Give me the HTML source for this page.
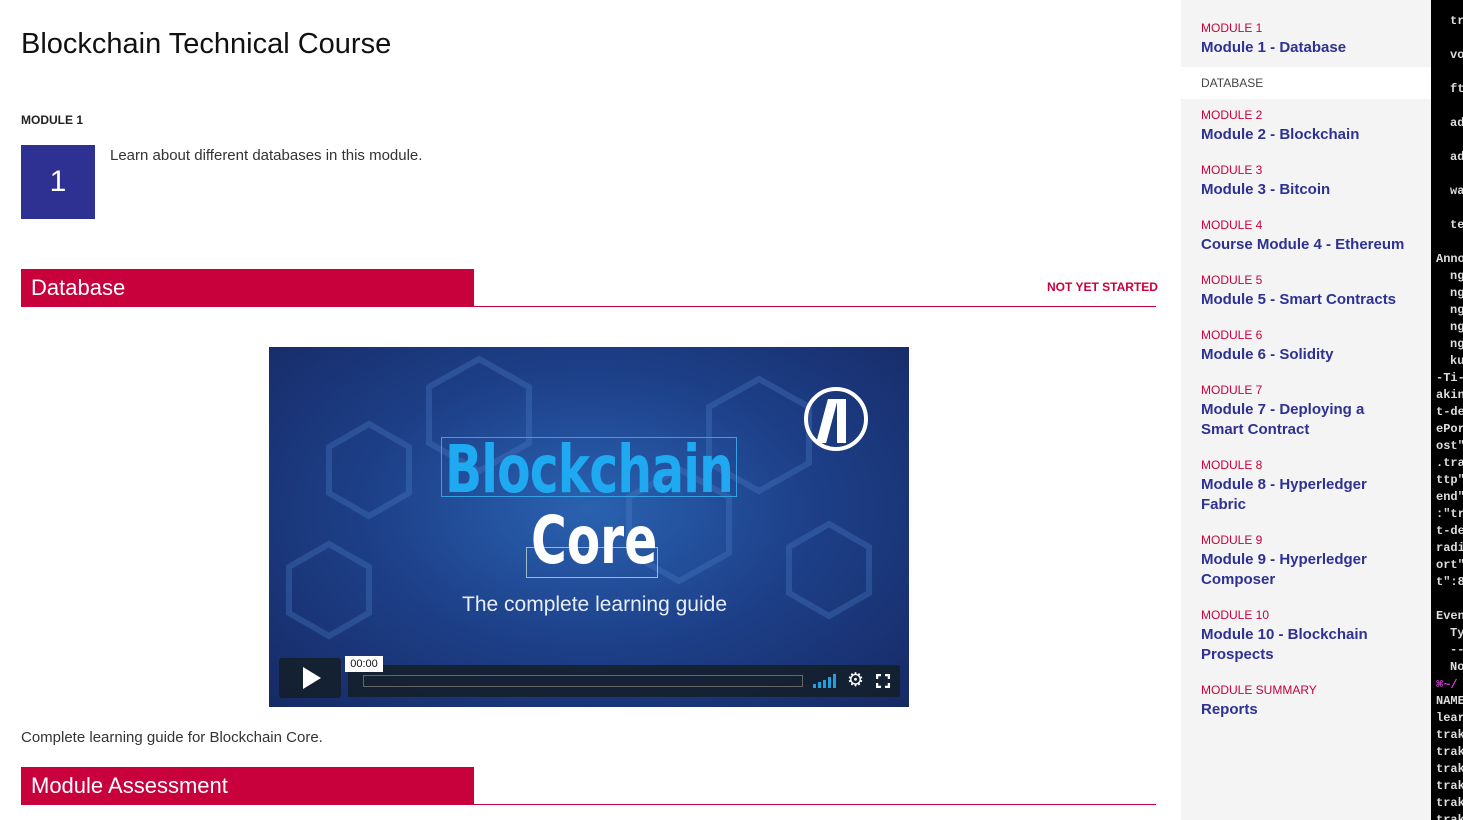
<!DOCTYPE html>
<html><head><meta charset="utf-8"><style>
*{margin:0;padding:0;box-sizing:border-box}
body{width:1463px;height:820px;overflow:hidden;background:#fff;font-family:"Liberation Sans",sans-serif;position:relative;color:#222}
.a{position:absolute;white-space:nowrap}
.side{position:absolute;left:1181px;top:0;width:250px;height:820px;background:#f4f4f5}
.ml{position:absolute;left:20px;font-size:12px;color:#c8003c;margin-top:1px}
.mt{position:absolute;left:20px;font-size:15px;color:#2e3192;font-weight:bold;line-height:20px;margin-top:1px}
.term{position:absolute;left:1431px;top:0;width:32px;height:820px;background:#000;color:#ddd;font-family:"Liberation Mono",monospace;font-size:12px;font-weight:bold;overflow:hidden}
.term div{position:absolute;white-space:pre;margin-top:2px}
.bar{position:absolute;left:21px;width:1135px;border-bottom:1px solid #c8003c}
.bar span{display:block;width:453px;height:37px;background:#c8003c;color:#fff;font-size:22px;line-height:37px;padding-left:10px}
</style></head><body>
<div class="a" style="left:21px;top:28px;font-size:29px;color:#111">Blockchain Technical Course</div>
<div class="a" style="left:21px;top:113px;font-size:12px;font-weight:bold">MODULE 1</div>
<div class="a" style="left:21px;top:145px;width:74px;height:74px;background:#2e3192;color:#fff;font-size:30px;text-align:center;line-height:74px">1</div>
<div class="a" style="left:110px;top:147px;font-size:15px;color:#333">Learn about different databases in this module.</div>
<div class="bar" style="top:269px"><span>Database</span></div>
<div class="a" style="left:1047px;top:280px;font-size:12px;color:#c8003c;font-weight:bold">NOT YET STARTED</div>
<div class="a" style="left:269px;top:347px;width:640px;height:360px;background:radial-gradient(ellipse at 50% 45%,#2a62b0 0%,#1d3f88 50%,#162a64 100%);overflow:hidden">
 <svg width="640" height="360" style="position:absolute;left:0;top:0" fill="none" stroke="#4a7bc4" stroke-opacity=".35" stroke-width="6">
  <polygon points="60,100 100,77 140,100 140,146 100,169 60,146"/><polygon points="160,40 210,12 260,40 260,96 210,124 160,96"/>
  <polygon points="440,60 490,32 540,60 540,116 490,144 440,116"/><polygon points="520,200 560,177 600,200 600,246 560,269 520,246"/>
  <polygon points="20,220 60,197 100,220 100,266 60,289 20,266"/><polygon points="360,150 410,122 460,150 460,206 410,234 360,206"/>
 </svg>
 <div style="position:absolute;left:172px;top:90px;width:296px;height:60px;border:1px solid #3aa0e6"></div>
 <div class="a" style="left:176px;top:84px;font-family:'DejaVu Sans Condensed','Liberation Sans Narrow',sans-serif;font-weight:bold;font-size:66px;color:#1fa9f0;letter-spacing:-1px;transform:scaleX(.82);transform-origin:left">Blockchain</div>
 <div style="position:absolute;left:257px;top:200px;width:132px;height:31px;border:1px solid #9bc"></div>
 <div class="a" style="left:262px;top:155px;font-family:'DejaVu Sans Condensed',sans-serif;font-weight:bold;font-size:66px;color:#fff;transform:scaleX(.82);transform-origin:left">Core</div>
 <div class="a" style="left:193px;top:246px;font-size:21px;color:#e8eef8">The complete learning guide</div>
 <div style="position:absolute;left:535px;top:40px;width:64px;height:64px;border:4px solid #fff;border-radius:50%"></div>
 <div class="a" style="left:553px;top:52px;width:10px;height:44px;background:#fff;transform:skewX(-15deg)"></div>
 <div class="a" style="left:568px;top:52px;width:9px;height:44px;background:#fff"></div>
 <div class="a" style="left:10px;top:311px;width:62px;height:40px;background:rgba(20,30,40,.85);border-radius:3px"></div>
 <svg class="a" style="left:34px;top:320px" width="20" height="22"><polygon points="0,0 18,11 0,22" fill="#fff"/></svg>
 <div class="a" style="left:79px;top:318px;width:552px;height:32px;background:rgba(20,30,40,.85);border-radius:2px"></div>
 <div class="a" style="left:94px;top:328px;width:440px;height:12px;border:1px solid #666"></div>
 <div class="a" style="left:76px;top:309px;width:38px;height:16px;background:#fff;font-size:11px;color:#111;text-align:center;line-height:16px">00:00</div>
 <svg class="a" style="left:544px;top:327px" width="26" height="14" fill="#1fa0e0"><rect x="0" y="10" width="3" height="4"/><rect x="5" y="8" width="3" height="6"/><rect x="10" y="6" width="3" height="8"/><rect x="15" y="3" width="3" height="11"/><rect x="20" y="0" width="3" height="14"/></svg>
 <div class="a" style="left:578px;top:322px;font-size:19px;color:#fff">⚙</div>
 <svg class="a" style="left:607px;top:327px" width="14" height="14" stroke="#fff" stroke-width="2.5" fill="none"><path d="M1 5V1h4M9 1h4v4M13 9v4H9M5 13H1V9"/></svg>
</div>
<div class="a" style="left:21px;top:729px;font-size:15px;color:#333">Complete learning guide for Blockchain Core.</div>
<div class="bar" style="top:767px"><span>Module Assessment</span></div>

<div class="side">
 <div style="position:absolute;left:0;top:67px;width:250px;height:32px;background:#fff"></div>
 <div class="a" style="left:20px;top:76px;font-size:12px;color:#444">DATABASE</div>
 <div class="ml" style="top:20px">MODULE 1</div><div class="mt" style="top:37px">Module 1 - Database</div>
 <div class="ml" style="top:107px">MODULE 2</div><div class="mt" style="top:124px">Module 2 - Blockchain</div>
 <div class="ml" style="top:162px">MODULE 3</div><div class="mt" style="top:179px">Module 3 - Bitcoin</div>
 <div class="ml" style="top:217px">MODULE 4</div><div class="mt" style="top:234px">Course Module 4 - Ethereum</div>
 <div class="ml" style="top:272px">MODULE 5</div><div class="mt" style="top:289px">Module 5 - Smart Contracts</div>
 <div class="ml" style="top:327px">MODULE 6</div><div class="mt" style="top:344px">Module 6 - Solidity</div>
 <div class="ml" style="top:382px">MODULE 7</div><div class="mt" style="top:399px">Module 7 - Deploying a<br>Smart Contract</div>
 <div class="ml" style="top:457px">MODULE 8</div><div class="mt" style="top:474px">Module 8 - Hyperledger<br>Fabric</div>
 <div class="ml" style="top:532px">MODULE 9</div><div class="mt" style="top:549px">Module 9 - Hyperledger<br>Composer</div>
 <div class="ml" style="top:607px">MODULE 10</div><div class="mt" style="top:624px">Module 10 - Blockchain<br>Prospects</div>
 <div class="ml" style="top:682px">MODULE SUMMARY</div><div class="mt" style="top:699px">Reports</div>
</div>
<div class="term">
<div style="top:12px;left:19px">tr</div><div style="top:46px;left:19px">vo</div><div style="top:80px;left:19px">ft</div><div style="top:114px;left:19px">ad</div><div style="top:148px;left:19px">ad</div><div style="top:182px;left:19px">wa</div><div style="top:216px;left:19px">te</div>
<div style="top:250px;left:5px">Anno</div>
<div style="top:267px;left:19px">ng</div><div style="top:284px;left:19px">ng</div><div style="top:301px;left:19px">ng</div><div style="top:318px;left:19px">ng</div><div style="top:335px;left:19px">ng</div><div style="top:352px;left:19px">ku</div>
<div style="top:369px;left:5px">-Ti-</div><div style="top:386px;left:5px">akin</div><div style="top:403px;left:5px">t-de</div><div style="top:420px;left:5px">ePor</div><div style="top:437px;left:5px">ost"</div><div style="top:454px;left:5px">.tra</div><div style="top:471px;left:5px">ttp"</div><div style="top:488px;left:5px">end"</div><div style="top:505px;left:5px">:"tr</div><div style="top:522px;left:5px">t-de</div><div style="top:539px;left:5px">radi</div><div style="top:556px;left:5px">ort"</div><div style="top:573px;left:5px">t":8</div>
<div style="top:607px;left:5px">Even</div><div style="top:624px;left:19px">Ty</div><div style="top:641px;left:19px">--</div><div style="top:658px;left:19px">No</div>
<div style="top:675px;left:5px;color:#d040d0">⌘~/</div>
<div style="top:692px;left:5px">NAME</div><div style="top:709px;left:5px">lear</div><div style="top:726px;left:5px">trak</div><div style="top:743px;left:5px">trak</div><div style="top:760px;left:5px">trak</div><div style="top:777px;left:5px">trak</div><div style="top:794px;left:5px">trak</div><div style="top:811px;left:5px">trak</div>
</div>
</body></html>
